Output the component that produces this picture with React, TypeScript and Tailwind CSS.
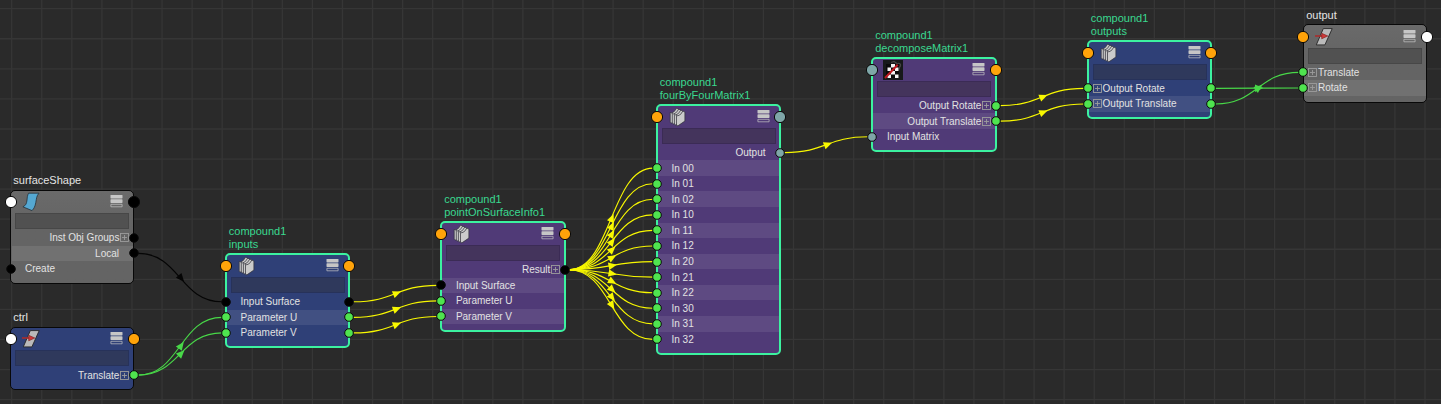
import React from "react";
import { clsx } from "clsx";

type Tone = "gray" | "blue" | "purple";
type PortColor = "white" | "black" | "orange" | "green" | "teal";
type IconKind = "surface" | "transform" | "compound" | "matrix";

interface Row {
  label: string;
  align: "left" | "right";
  plus?: boolean;
  left?: PortColor;
  right?: PortColor;
}

interface NodeData {
  id: string;
  x: number;
  y: number;
  title: string[];
  tone: Tone;
  member?: boolean;
  icon: IconKind;
  left: PortColor;
  right: PortColor;
  rows: Row[];
}

const ROW = 15.57;
const HEAD = 40;

const left = (label: string, l: PortColor, r?: PortColor, plus = false): Row => ({
  label,
  align: "left",
  left: l,
  right: r,
  plus,
});
const right = (label: string, r: PortColor, plus = false): Row => ({ label, align: "right", right: r, plus });

const nodes: NodeData[] = [
  {
    id: "surface", x: 10.5, y: 190, title: ["surfaceShape"], tone: "gray", icon: "surface", left: "white", right: "black",
    rows: [right("Inst Obj Groups", "black", true), right("Local", "black"), left("Create", "black")],
  },
  {
    id: "ctrl", x: 10.5, y: 327.4, title: ["ctrl"], tone: "blue", icon: "transform", left: "white", right: "orange",
    rows: [right("Translate", "green", true)],
  },
  {
    id: "inputs", x: 226, y: 254, title: ["compound1", "inputs"], tone: "blue", member: true, icon: "compound", left: "orange", right: "orange",
    rows: [left("Input Surface", "black", "black"), left("Parameter U", "green", "green"), left("Parameter V", "green", "green")],
  },
  {
    id: "point", x: 441.4, y: 222, title: ["compound1", "pointOnSurfaceInfo1"], tone: "purple", member: true, icon: "compound", left: "orange", right: "orange",
    rows: [right("Result", "black", true), left("Input Surface", "black"), left("Parameter U", "green"), left("Parameter V", "green")],
  },
  {
    id: "four", x: 657, y: 104.8, title: ["compound1", "fourByFourMatrix1"], tone: "purple", member: true, icon: "compound", left: "orange", right: "teal",
    rows: [
      right("Output", "teal"),
      ...["00", "01", "02", "10", "11", "12", "20", "21", "22", "30", "31", "32"].map((n) => left(`In ${n}`, "green")),
    ],
  },
  {
    id: "decompose", x: 872.4, y: 57.8, title: ["compound1", "decomposeMatrix1"], tone: "purple", member: true, icon: "matrix", left: "teal", right: "orange",
    rows: [right("Output Rotate", "green", true), right("Output Translate", "green", true), left("Input Matrix", "teal")],
  },
  {
    id: "outputs", x: 1088, y: 40.6, title: ["compound1", "outputs"], tone: "blue", member: true, icon: "compound", left: "orange", right: "orange",
    rows: [left("Output Rotate", "green", "green", true), left("Output Translate", "green", "green", true)],
  },
  {
    id: "output", x: 1303.4, y: 24.6, title: ["output"], tone: "gray", icon: "transform", left: "orange", right: "white",
    rows: [left("Translate", "green", undefined, true), left("Rotate", "green", undefined, true)],
  },
];

const BODY: Record<Tone, string> = {
  gray: "bg-linear-to-b from-[#6a6a6a] from-0% to-[#646464] to-40%",
  blue: "bg-[#2f4077]",
  purple: "bg-[#503a77]",
};
const BAND: Record<Tone, string> = {
  gray: "bg-[#717171]",
  blue: "bg-[#415082]",
  purple: "bg-[#5e4a82]",
};
const FIELD: Record<Tone, string> = {
  gray: "bg-[#515151] border-[#474747]",
  blue: "bg-[#2f395c] border-[#27325a]",
  purple: "bg-[#44345c] border-[#3b2b55]",
};
const FILL: Record<PortColor, string> = {
  white: "fill-white",
  black: "fill-black",
  orange: "fill-[#ffa30a]",
  green: "fill-[#4fe44f]",
  teal: "fill-[#7fa6a8]",
};

function Port({ color, side, big }: { color: PortColor; side: "left" | "right"; big?: boolean }) {
  return (
    <svg
      viewBox="-7 -7 14 14"
      className={clsx(
        "absolute top-1/2 size-[14px] -translate-y-1/2",
        FILL[color],
        side === "left" ? "left-0 -translate-x-1/2" : "right-0 translate-x-1/2",
      )}
    >
      <circle r={big ? 5.6 : 4.3} stroke="#0a0a0a" strokeWidth="1" />
    </svg>
  );
}

function Plus() {
  return (
    <svg className="h-[9px] w-[9px] shrink-0" viewBox="0 0 9 9" fill="none" stroke="#9c9c9c" strokeWidth="0.9">
      <rect x="0.5" y="0.5" width="8" height="8" />
      <path d="M4.5 2v5M2 4.5h5" />
    </svg>
  );
}

function Stack() {
  return (
    <svg className="h-[13px] w-[13px]" viewBox="0 0 13 13" fill="#c6c6c6">
      <rect x="0.5" y="0" width="12" height="3.4" rx="0.6" />
      <rect x="0.5" y="4.3" width="12" height="3.6" rx="0.6" />
      <path d="M0.9 9.3h11.2v2.5H0.9Z" fill="none" stroke="#c6c6c6" strokeWidth="0.7" />
    </svg>
  );
}

const SHEETS = [0, 1, 2, 3];

function NodeIcon({ kind }: { kind: IconKind }) {
  if (kind === "surface")
    return (
      <svg className="size-5" viewBox="0 0 20 20">
        <path d="M6.6 1.2H17C14.4 4 14.6 6.5 13.8 10.5C13 14.6 12.2 16.2 10 18.6L0.9 14.8C3.9 13.4 4.6 11.5 5 8C5.3 5 5.4 3.3 6.6 1.2Z" fill="#55a8d2" stroke="#25313a" strokeWidth="0.8" />
      </svg>
    );
  if (kind === "transform")
    return (
      <svg className="size-5" viewBox="0 0 20 20">
        <path d="M8.3 1.6H17.2L9.9 17.9H1.3Z" fill="#bababa" stroke="#262626" strokeWidth="0.9" />
        <path d="M0 9h7" stroke="#a92c2c" strokeWidth="1.6" />
        <path d="M6.7 6.3 12.8 9 6.7 11.8Z" fill="#cf3838" stroke="#7a1f1f" strokeWidth="0.6" />
      </svg>
    );
  if (kind === "matrix")
    return (
      <svg className="-ml-[0.6px] size-5" viewBox="0 0 20 20">
        <rect width="20" height="20" fill="#17191a" />
        <path d="M14 4.5c1.5-2 4-1 3.5 1s-1.5 2-2.5 3.2M8 2.5l3-1 3 2M14 10l3-1.5" fill="none" stroke="#454545" strokeWidth="1.3" />
        <rect x="3" y="4" width="13" height="14" fill="#0a0a0a" />
        <path d="M8 4h4v3.5H8zM4.5 7.5H8V11H4.500zM12 7.500h3.500V11H12zM8 11h4v3.500H8zM4.500 14.500H8V18H4.500zM12 14.500h3.500V18H12z" fill="#f4f4f4" />
        <path d="M2 18 14.7 4.7" stroke="#c01820" strokeWidth="2" />
      </svg>
    );
  return (
    <svg className="size-5" viewBox="0 0 20 20" fill="#cbcbcb" stroke="#34343c" strokeWidth="0.75" strokeLinejoin="round">
      {SHEETS.map((i) => (
        <path
          key={i}
          transform={`translate(${i * 2.1} ${i * 0.95})`}
          d="M1.2 5.4 2.6 6 5.2 4.6 7.6 1.2 9.6 2.2V11.2L2.600 16 1.200 15.400Z"
        />
      ))}
    </svg>
  );
}

function GraphNode({ node }: { node: NodeData }) {
  const member = node.member;
  return (
    <div className="absolute w-[123.3px]" style={{ left: node.x, top: node.y }}>
      <div
        className={clsx(
          "absolute bottom-full left-[2.8px] mb-[3px] whitespace-nowrap text-[11px] leading-[13px]",
          member ? "text-[#3ad890]" : "text-[#e4e4e4]",
        )}
      >
        {node.title.map((t) => (
          <div key={t}>{t}</div>
        ))}
      </div>
      <div
        className={clsx(
          "absolute rounded-[5px]",
          BODY[node.tone],
          member ? "-inset-[1px] border-2 border-[#3cf2a0]" : "-inset-[0.5px] border border-[#080808]",
        )}
      />
      <div className="relative flex flex-col pb-[6.5px]">
        <div className="relative mt-[2px] flex h-5 items-center justify-between pr-[10.5px] pl-[11.5px]">
          <NodeIcon kind={node.icon} />
          <span className="-mt-[1px]">
            <Stack />
          </span>
          <Port color={node.left} side="left" big />
          <Port color={node.right} side="right" big />
        </div>
        <div className={clsx("mx-[4.5px] mt-[1px] mb-[1px] h-4 border", FIELD[node.tone])} />
        {node.rows.map((r, i) => (
          <div key={r.label} className="relative h-[15.57px] px-[1px]">
            <div
              className={clsx(
                "flex h-full items-center text-[10px] leading-[15px] text-[#e2e2e2]",
                i % 2 === 1 && BAND[node.tone],
                r.align === "right" ? "justify-end gap-[0.5px]" : "justify-start gap-[1px]",
                r.align === "right" ? (r.plus ? "pr-[3.9px]" : "pr-[13.8px]") : r.plus ? "pl-[3.6px]" : "pl-[13.5px]",
              )}
            >
              {r.plus && r.align === "left" && <Plus />}
              <span className="whitespace-nowrap">{r.label}</span>
              {r.plus && r.align === "right" && <Plus />}
            </div>
            {r.left && <Port color={r.left} side="left" />}
            {r.right && <Port color={r.right} side="right" />}
          </div>
        ))}
      </div>
    </div>
  );
}

type Link = [from: string, fromRow: number, to: string, toRow: number, color: string];

const YELLOW = "#f8f800";
const GREEN = "#48d848";

const links: Link[] = [
  ["surface", 1, "inputs", 0, "#050505"],
  ["ctrl", 0, "inputs", 1, GREEN],
  ["ctrl", 0, "inputs", 2, GREEN],
  ["inputs", 0, "point", 1, YELLOW],
  ["inputs", 1, "point", 2, YELLOW],
  ["inputs", 2, "point", 3, YELLOW],
  ...Array.from({ length: 12 }, (_, i): Link => ["point", 0, "four", i + 1, YELLOW]),
  ["four", 0, "decompose", 2, YELLOW],
  ["decompose", 0, "outputs", 0, YELLOW],
  ["decompose", 1, "outputs", 1, YELLOW],
  ["outputs", 0, "output", 1, GREEN],
  ["outputs", 1, "output", 0, GREEN],
];

function Links() {
  const byId = Object.fromEntries(nodes.map((n) => [n.id, n]));
  const rowY = (n: NodeData, i: number) => n.y + HEAD + ROW * (i + 0.5);
  return (
    <svg className="absolute inset-0 h-full w-full" fill="none">
      {links.map(([f, fr, t, tr, color]) => {
        const x1 = byId[f].x + 127.5;
        const y1 = rowY(byId[f], fr);
        const x2 = byId[t].x - 4;
        const y2 = rowY(byId[t], tr);
        const mx = (x1 + x2) / 2;
        const my = (y1 + y2) / 2;
        const angle = (Math.atan2((y2 - y1) * 2, x2 - x1) * 180) / Math.PI;
        return (
          <g key={`${f}${fr}${t}${tr}`}>
            <path d={`M${x1} ${y1}C${mx} ${y1} ${mx} ${y2} ${x2} ${y2}`} stroke={color} strokeWidth="1.15" />
            <path d="M-3-3.7 5.4 0-3 3.7Z" fill={color} transform={`translate(${mx + 0.6} ${my}) rotate(${angle})`} />
          </g>
        );
      })}
    </svg>
  );
}

function Grid() {
  return (
    <svg className="absolute inset-0 h-full w-full" stroke="#363636" strokeWidth="1.3">
      {Array.from({ length: 48 }, (_, i) => (
        <path key={`v${i}`} d={`M${11.7 + i * 30.07} 0V404`} />
      ))}
      {Array.from({ length: 14 }, (_, i) => (
        <path key={`h${i}`} d={`M0 ${8.7 + i * 30.07}H1441`} />
      ))}
    </svg>
  );
}

export default function App() {
  return (
    <main className="relative h-[404px] w-[1441px] overflow-hidden bg-[#2a2a2a] font-['Liberation_Sans',Arial,sans-serif]">
      <Grid />
      <Links />
      {nodes.map((n) => (
        <GraphNode key={n.id} node={n} />
      ))}
    </main>
  );
}
